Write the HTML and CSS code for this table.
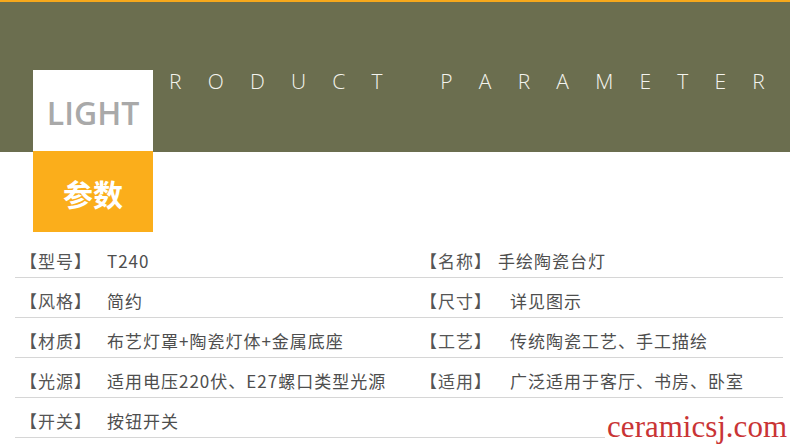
FILE: index.html
```html
<!DOCTYPE html>
<html lang="zh-CN">
<head>
<meta charset="utf-8">
<title>产品参数</title>
<link rel="stylesheet" href="styles.css">
</head>
<body>
<div class="page">
  <header class="hero">
    <div class="badge">
      <div class="badge-en">LIGHT</div>
      <div class="badge-cn">参数</div>
    </div>
    <h1 class="hero-title">RODUCT PARAMETER</h1>
  </header>
  <section class="specs">
    <div class="row">
      <div class="cell"><span class="label">【型号】</span><span class="value">T240</span></div>
      <div class="cell"><span class="label label-tight">【名称】</span><span class="value">手绘陶瓷台灯</span></div>
    </div>
    <div class="row">
      <div class="cell"><span class="label">【风格】</span><span class="value">简约</span></div>
      <div class="cell"><span class="label">【尺寸】</span><span class="value">详见图示</span></div>
    </div>
    <div class="row">
      <div class="cell"><span class="label">【材质】</span><span class="value">布艺灯罩+陶瓷灯体+金属底座</span></div>
      <div class="cell"><span class="label">【工艺】</span><span class="value">传统陶瓷工艺、手工描绘</span></div>
    </div>
    <div class="row">
      <div class="cell"><span class="label">【光源】</span><span class="value">适用电压220伏、E27螺口类型光源</span></div>
      <div class="cell"><span class="label">【适用】</span><span class="value">广泛适用于客厅、书房、卧室</span></div>
    </div>
    <div class="row">
      <div class="cell"><span class="label">【开关】</span><span class="value">按钮开关</span></div>
      <div class="cell"></div>
    </div>
    <div class="watermark">ceramicsj.com</div>
  </section>
</div>
</body>
</html>
```

FILE: styles.css
```css
* { box-sizing: border-box; }
html, body { margin: 0; padding: 0; background: #fff; }
body { width: 790px; height: 444px; overflow: hidden; }

.page {
  border-top: 2px solid #f6a81c;
  background: linear-gradient(#6b6e4f 0, #6b6e4f 150px, #fff 150px);
  height: 442px;
}

.hero {
  display: flex;
  align-items: flex-start;
  padding: 68px 0 0 33px;
}

.badge { width: 120px; flex: none; display: flex; flex-direction: column; }

.badge-en {
  height: 81px;
  background: #fff;
  color: #a9a9a9;
  font-family: "Open Sans", "Noto Sans", sans-serif;
  font-size: 32px;
  font-weight: 600;
  display: flex;
  align-items: center;
  justify-content: center;
  padding-top: 3px;
}

.badge-cn {
  height: 81px;
  background: #fbae1b;
  color: #fff;
  font-family: "Noto Sans CJK SC", sans-serif;
  font-size: 30px;
  font-weight: 700;
  display: flex;
  align-items: center;
  justify-content: center;
  padding-top: 3px;
}

.hero-title {
  margin: 1px 0 0 16px;
  font-family: "Open Sans", "Liberation Sans", sans-serif;
  font-weight: 300;
  font-size: 21px;
  line-height: 21px;
  letter-spacing: 26.2px;
  color: #f4f4ee;
  white-space: nowrap;
}

.specs {
  position: relative;
  margin: 6px 7px 0 15px;
  font-family: "Noto Sans CJK SC", sans-serif;
  font-size: 17px;
  letter-spacing: 1px;
  color: #4e4e4e;
}

.row {
  display: grid;
  grid-template-columns: 401px 1fr;
  height: 40px;
  border-bottom: 1px solid #d6d6d6;
}

.cell {
  display: flex;
  align-items: flex-start;
  padding-top: 11px;
  line-height: 24px;
  white-space: nowrap;
}

.label { width: 92px; flex: none; padding-left: 5px; color: #555; }
.row .cell + .cell .label { width: 94px; padding-left: 4px; }
.row .cell + .cell .label-tight { width: 82px; }

.watermark {
  position: absolute;
  right: -7px;
  bottom: -6px;
  padding: 0 3px 0 2px;
  background: #fff;
  font-family: "Liberation Serif", serif;
  font-size: 31px;
  line-height: 34px;
  letter-spacing: 0;
  color: #c93435;
}
```
